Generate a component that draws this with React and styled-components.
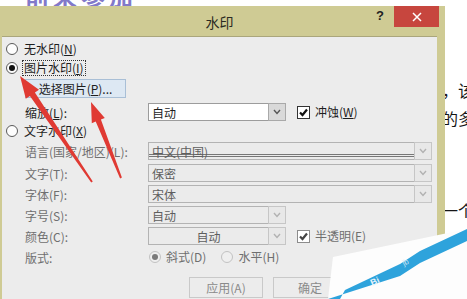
import React from "react";
import styled, { createGlobalStyle } from "styled-components";

const GlobalStyle = createGlobalStyle`
  html, body {
    margin: 0;
    padding: 0;
    background: #fff;
    width: 467px;
    height: 299px;
    overflow: hidden;
  }
  body {
    font-family: "Noto Sans CJK SC", "Noto Sans", sans-serif;
    font-size: 12px;
    color: #1e1e1e;
  }
`;

const Page = styled.div`
  position: relative;
  width: 467px;
  height: 299px;
  overflow: hidden;
`;

const TopText = styled.div`
  height: 24px;
  margin-bottom: -18px;
  overflow: hidden;
  padding-left: 25px;
  span {
    display: block;
    margin-top: -16px;
    font-size: 24px;
    line-height: 24px;
    font-weight: 700;
    color: #8279c9;
    letter-spacing: 4px;
  }
`;

const Main = styled.div`
  position: relative;
  display: flex;
  align-items: flex-start;
`;

const Dialog = styled.div`
  position: relative;
  z-index: 1;
  flex: none;
  width: 451px;
  height: 320px;
  margin-left: -6px;
  background: #cfcb94;
  display: flex;
  flex-direction: column;
`;

const TitleBar = styled.div`
  height: 30px;
  display: grid;
  grid-template-columns: 1fr auto 1fr;
  align-items: center;
`;

const Title = styled.div`
  font-size: 14px;
  color: #2a2a22;
  padding-top: 1px;
`;

const TitleTools = styled.div`
  align-self: start;
  display: flex;
  justify-content: flex-end;
  align-items: flex-start;
  padding-right: 6px;
`;

const Help = styled.div`
  margin: 3px 10px 0 0;
  font-family: "Liberation Sans", sans-serif;
  font-weight: 700;
  font-size: 13px;
  line-height: 14px;
  color: #222;
`;

const Close = styled.div`
  width: 45px;
  height: 21px;
  background: #c7463e;
  display: flex;
  align-items: center;
  justify-content: center;
`;

const Body = styled.div`
  flex: 1;
  margin: 0 8px;
  background: #ececec;
  border-top: 1px solid #aaa67c;
  padding: 4px 0 0 4px;
  display: flex;
  flex-direction: column;
  gap: 3px;
`;

const RadioRow = styled.div`
  height: 16px;
  display: flex;
  align-items: center;
  gap: 5px;
  margin-top: ${(p) => p.$mt || 0}px;
`;

const RadioDot = styled.span`
  flex: none;
  box-sizing: border-box;
  width: 12px;
  height: 12px;
  border-radius: 50%;
  border: 1px solid ${(p) => (p.$disabled ? "#c2c2c2" : "#5a5a5a")};
  background: ${(p) => (p.$disabled ? "#efefef" : "#fdfdfd")};
  display: flex;
  align-items: center;
  justify-content: center;
  &::after {
    content: "";
    width: 6px;
    height: 6px;
    border-radius: 50%;
    background: ${(p) =>
      p.$checked ? (p.$disabled ? "#7a7a7a" : "#111") : "transparent"};
  }
`;

const Label = styled.span`
  color: ${(p) => (p.$disabled ? "#6f6f6f" : "#1e1e1e")};
  white-space: nowrap;
  line-height: 14px;
  padding: 0 1px;
  outline: ${(p) => (p.$focus ? "1px dotted #333" : "none")};
  outline-offset: 0;
  u {
    text-decoration: underline;
  }
`;

const PickButton = styled.div`
  box-sizing: border-box;
  width: 101px;
  height: 19px;
  margin-left: 19px;
  background: #dde8f3;
  border: 1px solid #a9bfd6;
  display: flex;
  align-items: center;
  justify-content: center;
  color: #1e1e1e;
`;

const FieldRow = styled.div`
  height: 18px;
  display: flex;
  align-items: center;
  padding-left: 19px;
  margin-top: ${(p) => p.$mt || 0}px;
`;

const FieldLabel = styled.div`
  flex: none;
  width: 123px;
  color: ${(p) => (p.$disabled ? "#6f6f6f" : "#1e1e1e")};
  white-space: nowrap;
`;

const Select = styled.div`
  flex: none;
  display: flex;
  width: ${(p) => p.$width}px;
  height: 18px;
`;

const SelectField = styled.div`
  flex: 1;
  box-sizing: border-box;
  border: 1px solid ${(p) => (p.$disabled ? "#b3b3b3" : "#9c9c9c")};
  background: ${(p) => (p.$disabled ? "#ebebeb" : "#fff")};
  color: ${(p) => (p.$disabled ? "#5e5e5e" : "#1e1e1e")};
  display: flex;
  align-items: center;
  justify-content: ${(p) => (p.$center ? "center" : "flex-start")};
  padding-left: ${(p) => (p.$center ? 0 : 3)}px;
  box-shadow: ${(p) =>
    p.$lined
      ? "inset 0 -2px 0 #ebebeb, inset 0 -3px 0 #777, inset 0 -4px 0 #ebebeb, inset 0 -5px 0 #777"
      : "none"};
`;

const SelectArrow = styled.div`
  flex: none;
  box-sizing: border-box;
  width: 18px;
  margin-left: -1px;
  border: 1px solid ${(p) => (p.$disabled ? "#c6c6c6" : "#a9a9a9")};
  background: ${(p) => (p.$disabled ? "#e8e8e8" : "#d9d9d9")};
  display: flex;
  align-items: center;
  justify-content: center;
`;

const Check = styled.div`
  margin-left: 11px;
  display: flex;
  align-items: center;
  gap: 4px;
`;

const CheckBox = styled.span`
  box-sizing: border-box;
  width: 13px;
  height: 13px;
  border: 1px solid ${(p) => (p.$soft ? "#8c8c8c" : "#333")};
  background: #fff;
  display: flex;
  align-items: center;
  justify-content: center;
`;

const LayoutChoices = styled.div`
  display: flex;
  align-items: center;
  padding-left: 1px;
  gap: 4px;
`;

const Spacer = styled.span`
  width: ${(p) => p.$w}px;
`;

const ButtonRow = styled.div`
  display: flex;
  justify-content: flex-end;
  gap: 10px;
  padding-right: 6px;
  margin-top: 8px;
`;

const DlgButton = styled.div`
  box-sizing: border-box;
  width: 74px;
  height: 21px;
  background: #ececec;
  border: 1px solid #c9c9c9;
  color: #8a8a8a;
  display: flex;
  align-items: center;
  justify-content: center;
`;

const Aside = styled.div`
  flex: 1;
  margin-left: -3px;
  padding-top: 74px;
  font-size: 16px;
  line-height: 20px;
  color: #151515;
  white-space: nowrap;
`;

const Line = styled.div`
  margin-top: ${(p) => p.$mt || 0}px;
`;

const Overlay = styled.svg`
  position: absolute;
  left: 0;
  top: 0;
  z-index: 2;
  pointer-events: none;
`;

function Chevron({ color }) {
  return (
    <svg width="10" height="8" viewBox="0 0 10 8">
      <polyline points="2,2 5,5.5 8,2" fill="none" stroke={color} strokeWidth="1.4" />
    </svg>
  );
}

function Tick({ color }) {
  return (
    <svg width="11" height="11" viewBox="0 0 11 11">
      <polyline points="2,5.5 4.5,8 9,2.5" fill="none" stroke={color} strokeWidth="2.2" />
    </svg>
  );
}

function Dropdown({ width, text, disabled, center, lined }) {
  return (
    <Select $width={width}>
      <SelectField $disabled={disabled} $center={center} $lined={lined}>
        {text}
      </SelectField>
      <SelectArrow $disabled={disabled}>
        <Chevron color={disabled ? "#b2b2b2" : "#555"} />
      </SelectArrow>
    </Select>
  );
}

export default function App() {
  return (
    <Page>
      <GlobalStyle />
      <TopText>
        <span>前来参加</span>
      </TopText>
      <Main>
        <Dialog>
          <TitleBar>
            <div />
            <Title>水印</Title>
            <TitleTools>
              <Help>?</Help>
              <Close>
                <svg width="10" height="10" viewBox="0 0 10 10">
                  <path d="M1 1L9 9M9 1L1 9" stroke="#fff" strokeWidth="1.5" />
                </svg>
              </Close>
            </TitleTools>
          </TitleBar>
          <Body>
            <RadioRow>
              <RadioDot />
              <Label>
                无水印(<u>N</u>)
              </Label>
            </RadioRow>
            <RadioRow>
              <RadioDot $checked />
              <Label $focus>
                图片水印(<u>I</u>)
              </Label>
            </RadioRow>
            <PickButton>
              选择图片(<u>P</u>)...
            </PickButton>
            <FieldRow $mt={2}>
              <FieldLabel>
                缩放(<u>L</u>):
              </FieldLabel>
              <Dropdown width={138} text="自动" />
              <Check>
                <CheckBox>
                  <Tick color="#111" />
                </CheckBox>
                <Label>
                  冲蚀(<u>W</u>)
                </Label>
              </Check>
            </FieldRow>
            <RadioRow $mt={-1}>
              <RadioDot />
              <Label>
                文字水印(<u>X</u>)
              </Label>
            </RadioRow>
            <FieldRow>
              <FieldLabel $disabled>语言(国家/地区)(L):</FieldLabel>
              <Dropdown width={284} text="中文(中国)" disabled lined />
            </FieldRow>
            <FieldRow $mt={1}>
              <FieldLabel $disabled>文字(T):</FieldLabel>
              <Dropdown width={284} text="保密" disabled />
            </FieldRow>
            <FieldRow>
              <FieldLabel $disabled>字体(F):</FieldLabel>
              <Dropdown width={284} text="宋体" disabled />
            </FieldRow>
            <FieldRow>
              <FieldLabel $disabled>字号(S):</FieldLabel>
              <Dropdown width={138} text="自动" disabled />
            </FieldRow>
            <FieldRow>
              <FieldLabel $disabled>颜色(C):</FieldLabel>
              <Dropdown width={138} text="自动" disabled center />
              <Check>
                <CheckBox $soft>
                  <Tick color="#444" />
                </CheckBox>
                <Label $disabled>半透明(E)</Label>
              </Check>
            </FieldRow>
            <FieldRow>
              <FieldLabel $disabled>版式:</FieldLabel>
              <LayoutChoices>
                <RadioDot $disabled $checked />
                <Label $disabled>斜式(D)</Label>
                <Spacer $w={6} />
                <RadioDot $disabled />
                <Label $disabled>水平(H)</Label>
              </LayoutChoices>
            </FieldRow>
            <ButtonRow>
              <DlgButton>应用(A)</DlgButton>
              <DlgButton>确定</DlgButton>
              <DlgButton>取消</DlgButton>
            </ButtonRow>
          </Body>
        </Dialog>
        <Aside>
          <Line>，该</Line>
          <Line $mt={8}>的多</Line>
          <Line $mt={72}>一个</Line>
        </Aside>
      </Main>
      <Overlay width="467" height="299" viewBox="0 0 467 299">
        <polygon
          points="20,76 39,89.7 34.9,92.5 92.8,181.4 91.2,182.6 29.9,95.9 25.8,98.7"
          fill="#e03a33"
        />
        <polygon
          points="91,102 104.8,118 100.9,119.6 121.9,177.6 120.1,178.4 95.7,121.6 91.8,123.2"
          fill="#e03a33"
        />
        <polygon points="333,257 467,229 467,299 328,299" fill="#fdfdfd" />
        <polygon
          points="328,299 400,276 420,263 467,241 467,229 420,251 400,264 345,290 340,299"
          fill="#2ea3dc"
        />
        <text
          x="372"
          y="286"
          fontSize="9"
          fontWeight="700"
          fill="#e8f4fb"
          transform="rotate(-24 372 286)"
          fontFamily="Liberation Sans, sans-serif"
        >
          Bi
        </text>
        <text
          x="404"
          y="266"
          fontSize="8"
          fill="#cfe6f3"
          transform="rotate(-28 404 266)"
          fontFamily="Liberation Sans, sans-serif"
        >
          jb
        </text>
      </Overlay>
    </Page>
  );
}
